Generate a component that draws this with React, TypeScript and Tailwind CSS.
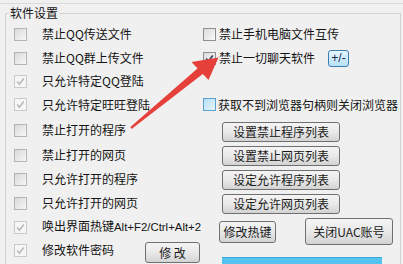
import React from "react";

const cjk = "font-['Microsoft_YaHei','Noto_Sans_CJK_SC',sans-serif]";

type BoxKind = "light" | "lightChecked" | "plain" | "checked" | "hover";

const CheckBox = ({ kind }: { kind: BoxKind }) => {
  const frame: Record<BoxKind, string> = {
    light: "border-[#b4b4b4] bg-linear-to-br from-[#d9d9d9] to-[#f7f7f7]",
    lightChecked: "border-[#cacaca] bg-[#f6f6f6]",
    plain: "border-[#8e8f8f] bg-linear-to-br from-[#dcdcdc] to-[#f8f8f8]",
    checked: "border-[#8e8f8f] bg-linear-to-br from-[#dcdcdc] to-[#f8f8f8]",
    hover: "border-[#5aa0cf] bg-linear-to-br from-[#b9def6] to-[#e6f4fc]",
  };
  const tick = kind === "lightChecked" ? "#b9b9b9" : "#2a3b63";
  return (
    <span
      className={`inline-flex h-[13px] w-[13px] shrink-0 items-center justify-center border ${frame[kind]}`}
    >
      {(kind === "lightChecked" || kind === "checked") && (
        <svg width="11" height="11" viewBox="0 0 11 11">
          <path
            d="M2.2 5.6 L4.4 8.2 L8.8 2.6"
            fill="none"
            stroke={tick}
            strokeWidth="1.6"
          />
        </svg>
      )}
    </span>
  );
};

const Btn = ({
  children,
  className = "",
}: {
  children: React.ReactNode;
  className?: string;
}) => (
  <button
    className={`flex shrink-0 items-center justify-center whitespace-pre rounded-[3px] border border-[#707070] bg-linear-to-b from-[#f4f4f4] via-[#e9e9e9] to-[#d3d3d3] text-[12px] leading-none text-[#1a1a1a] ${cjk} ${className}`}
  >
    {children}
  </button>
);

const Left = ({
  kind,
  children,
}: {
  kind: BoxKind;
  children: React.ReactNode;
}) => (
  <div className="flex w-[189px] shrink-0 items-center">
    <CheckBox kind={kind} />
    <span className="ml-[15px] whitespace-nowrap text-[12px] leading-none text-[#141414]">
      {children}
    </span>
  </div>
);

export default function App() {
  return (
    <div
      className={`relative h-[264px] w-[403px] overflow-hidden bg-[#f0f0f0] ${cjk}`}
    >
      <div className="mt-[3px] border-t border-[#dcdcdc]">
        <fieldset className="ml-[5px] mr-[2px] border border-[#d2d2d2] p-0">
          <legend className="ml-[3px] px-[1px] text-[12px] leading-[18px] text-[#141414]">
            软件设置
          </legend>
          <div className="pl-[8px]">
            <div className="flex h-[24px] items-center">
              <Left kind="light">禁止QQ传送文件</Left>
              <CheckBox kind="plain" />
              <span className="ml-[3px] text-[12px] leading-none text-[#141414]">
                禁止手机电脑文件互传
              </span>
            </div>
            <div className="flex h-[24px] items-center">
              <Left kind="light">禁止QQ群上传文件</Left>
              <CheckBox kind="checked" />
              <span className="ml-[3px] text-[12px] leading-none text-[#141414]">
                禁止一切聊天软件
              </span>
              <button className="ml-[13px] flex h-[17px] w-[21px] items-center justify-center rounded-[3px] border border-[#3c7fb1] bg-linear-to-b from-[#e6f5fd] to-[#b6e0fa] font-['Liberation_Sans',sans-serif] text-[12px] leading-none text-[#1b2a48]">
                +/-
              </button>
            </div>
            <div className="flex h-[22px] items-center">
              <Left kind="lightChecked">只允许特定QQ登陆</Left>
            </div>
            <div className="flex h-[25px] items-center">
              <Left kind="lightChecked">只允许特定旺旺登陆</Left>
              <CheckBox kind="hover" />
              <span className="ml-[2px] whitespace-nowrap text-[12px] leading-none text-[#141414]">
                获取不到浏览器句柄则关闭浏览器
              </span>
            </div>
            <div className="flex h-[26px] items-center">
              <Left kind="light">禁止打开的程序</Left>
              <Btn className="ml-[19px] mt-[3px] h-[20px] w-[118px]">设置禁止程序列表</Btn>
            </div>
            <div className="flex h-[24px] items-center">
              <Left kind="light">禁止打开的网页</Left>
              <Btn className="ml-[19px] mt-[2px] h-[20px] w-[118px]">设置禁止网页列表</Btn>
            </div>
            <div className="flex h-[24px] items-center">
              <Left kind="light">只允许打开的程序</Left>
              <Btn className="ml-[19px] mt-[2px] h-[20px] w-[118px]">设定允许程序列表</Btn>
            </div>
            <div className="flex h-[24px] items-center">
              <Left kind="light">只允许打开的网页</Left>
              <Btn className="ml-[19px] mt-[2px] h-[20px] w-[118px]">设定允许网页列表</Btn>
            </div>
            <div className="flex h-[24px] items-center">
              <Left kind="lightChecked">
                唤出界面热键
                <span className="font-['Liberation_Sans',sans-serif] text-[11.4px]">
                  Alt+F2/Ctrl+Alt+2
                </span>
              </Left>
              <Btn className="ml-[16px] mt-[10px] h-[22px] w-[57px]">修改热键</Btn>
              <Btn className="ml-[29px] mt-[9px] h-[27px] w-[88px] border-[#9a9a9a]">
                关闭UAC账号
              </Btn>
            </div>
            <div className="flex h-[30px] items-start">
              <div className="flex w-[189px] shrink-0 items-start">
                <div className="flex h-[22px] items-center">
                  <CheckBox kind="lightChecked" />
                  <span className="ml-[15px] text-[12px] leading-none text-[#141414]">
                    修改软件密码
                  </span>
                </div>
                <Btn className="ml-[31px] mt-[3px] h-[21px] w-[55px]">修 改</Btn>
              </div>
              <div className="ml-[19px] mt-[18px] h-[10px] w-[160px] border-t border-[#3aa6dc] bg-[#55c3ef]" />
            </div>
          </div>
        </fieldset>
      </div>

      <svg
        className="pointer-events-none absolute left-0 top-0"
        width="403"
        height="264"
        viewBox="0 0 403 264"
      >
        <polygon
          points="131.6,128.9 130.4,127.1 198.6,67.6 203.4,73.4"
          fill="#e5403a"
        />
        <polygon points="218.5,57.5 191.5,62 208.5,80" fill="#e5403a" />
      </svg>
    </div>
  );
}
